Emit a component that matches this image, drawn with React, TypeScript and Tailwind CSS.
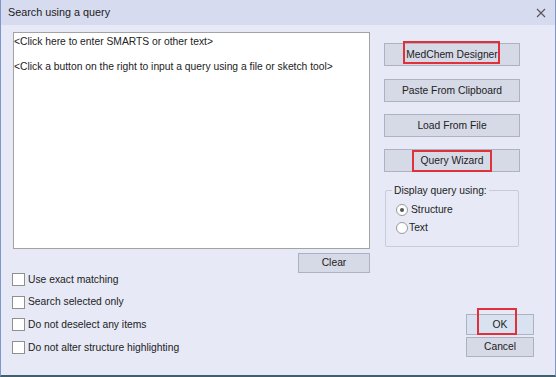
import React from 'react';

const font = { fontFamily: '"Liberation Sans", Arial, sans-serif' };

function Btn({ label, className = '' }: { label: string; className?: string }) {
  return (
    <div
      className={
        'flex items-center justify-center bg-[#d6d9e6] border border-[#aeb2c0] text-[10.3px] text-[#222] ' +
        className
      }
    >
      {label}
    </div>
  );
}

function Check({ label }: { label: string }) {
  return (
    <div className="flex items-center h-[22.7px]">
      <div className="w-[13px] h-[13px] bg-white border border-[#8e8f8f]" />
      <span className="ml-[3px] text-[10.3px] text-[#222]">{label}</span>
    </div>
  );
}

export default function App() {
  return (
    <div
      style={font}
      className="w-[556px] h-[377px] flex flex-col bg-[#e7eaf6] border-l border-r border-[#7d97c8] border-b-2 border-b-[#40606d] overflow-hidden"
    >
      {/* title bar */}
      <div className="h-[25px] shrink-0 flex items-center justify-between bg-[#d7dbef] pl-[7px] pr-[9px]">
        <span className="text-[10.8px] text-[#1b1b1b]">Search using a query</span>
        <svg width="10" height="10" viewBox="0 0 10 10" className="mt-[1px]">
          <path d="M1 1 L9 9 M9 1 L1 9" stroke="#555" strokeWidth="1.1" />
        </svg>
      </div>

      <div className="flex flex-1 pt-[7px]">
        {/* left column */}
        <div className="flex flex-col w-[358px] ml-[11px]">
          <div className="ml-[1px] h-[217px] bg-white border border-[#a3a3a3] pt-[2px] text-[10.3px] leading-[13px] text-[#222]">
            <div>&lt;Click here to enter SMARTS or other text&gt;</div>
            <div className="mt-[12px]">&lt;Click a button on the right to input a query using a file or sketch tool&gt;</div>
          </div>
          <Btn label="Clear" className="self-end w-[72px] h-[20px] mt-[4px]" />
          <div className="flex flex-col mt-[-5px]">
            <Check label="Use exact matching" />
            <Check label="Search selected only" />
            <Check label="Do not deselect any items" />
            <Check label="Do not alter structure highlighting" />
          </div>
        </div>

        {/* right column */}
        <div className="flex flex-col ml-[14px] w-[150px]">
          <div className="relative mt-[11px]">
            <Btn label="MedChem Designer" className="w-[136px] h-[23px]" />
            <div className="absolute left-[19px] top-[-2px] w-[97px] h-[23px] border-2 border-[#e0303a]" />
          </div>
          <Btn label="Paste From Clipboard" className="w-[136px] h-[23px] mt-[13px]" />
          <Btn label="Load From File" className="w-[136px] h-[23px] mt-[12px]" />
          <div className="relative mt-[12px]">
            <Btn label="Query Wizard" className="w-[136px] h-[23px]" />
            <div className="absolute left-[28px] top-[1px] w-[80px] h-[22px] border-2 border-[#e0303a]" />
          </div>

          <div className="relative mt-[18px] ml-[1px] w-[134px] h-[57px] border border-[#c9ccd8] rounded-[2px]">
            <span className="absolute left-[6px] top-[-8px] px-[2px] bg-[#e7eaf6] text-[10.3px] text-[#222]">
              Display query using:
            </span>
            <div className="flex flex-col pl-[10px] pt-[10px]">
              <div className="flex items-center h-[18px]">
                <div className="w-[12px] h-[12px] rounded-full bg-white border border-[#9a9a9a] flex items-center justify-center">
                  <div className="w-[4px] h-[4px] rounded-full bg-[#555]" />
                </div>
                <span className="ml-[3px] text-[10.3px] text-[#222]">Structure</span>
              </div>
              <div className="flex items-center h-[18px]">
                <div className="w-[12px] h-[12px] rounded-full bg-white border border-[#9a9a9a]" />
                <span className="ml-[1px] text-[10.3px] text-[#222]">Text</span>
              </div>
            </div>
          </div>

          <div className="self-end flex flex-col mt-[67px] mr-0">
            <div className="relative">
              <Btn label="OK" className="w-[68px] h-[21px] border-[#6f9fd6] bg-[#d9e2f1]" />
              <div className="absolute left-[11px] top-[-6px] w-[40px] h-[27px] border-2 border-[#e0303a]" />
            </div>
            <Btn label="Cancel" className="w-[68px] h-[20px] mt-[2px]" />
          </div>
        </div>
      </div>
    </div>
  );
}
